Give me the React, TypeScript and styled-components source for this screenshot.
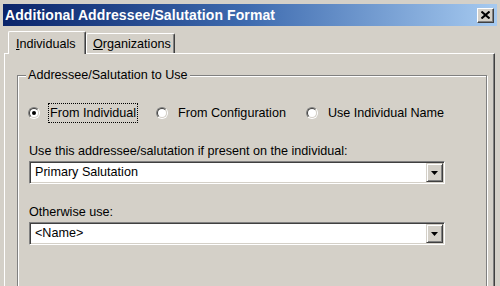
import { FC } from "react";
import styled, { createGlobalStyle } from "styled-components";

const GlobalStyle = createGlobalStyle`
  html, body {
    margin: 0;
    padding: 0;
    background: #d4d0c8;
  }
  body {
    font-family: "Liberation Sans", Arial, sans-serif;
    font-size: 12.6px;
    color: #000;
  }
`;

const Frame = styled.div`
  width: 500px;
  height: 286px;
  box-sizing: border-box;
  padding: 4px 3px 0 3px;
  background: #d4d0c8;
  overflow: hidden;
  display: flex;
  flex-direction: column;
`;

const TitleBar = styled.div`
  flex: 0 0 22px;
  display: flex;
  align-items: center;
  justify-content: space-between;
  padding: 0 3px 0 2px;
  background: linear-gradient(to right, #0a246a 0%, #3f6cb0 50%, #a6caf0 100%);
`;

const Title = styled.div`
  color: #fff;
  font-weight: bold;
  font-size: 14px;
  letter-spacing: 0.1px;
  white-space: nowrap;
`;

const CloseButton = styled.div`
  width: 17px;
  height: 15px;
  box-sizing: border-box;
  background: #d4d0c8;
  border: 1px solid;
  border-color: #fff #404040 #404040 #fff;
  box-shadow: inset -1px -1px 0 #808080;
  display: flex;
  align-items: center;
  justify-content: center;
`;

const Body = styled.div`
  flex: 1 1 auto;
  display: flex;
  flex-direction: column;
  padding: 5px 2px 0 1px;
`;

const TabStrip = styled.div`
  display: flex;
  align-items: flex-end;
  padding-left: 4px;
  position: relative;
  z-index: 1;
`;

const Tab = styled.div<{ $selected?: boolean; $width: number }>`
  width: ${(p) => p.$width}px;
  height: ${(p) => (p.$selected ? 23 : 20)}px;
  box-sizing: border-box;
  margin-bottom: ${(p) => (p.$selected ? -1 : 0)}px;
  padding: ${(p) => (p.$selected ? "5px 0 0 7px" : "3px 0 0 6px")};
  line-height: 14px;
  background: #d4d0c8;
  border-left: 1px solid #fff;
  border-top: 1px solid #fff;
  border-right: 1px solid #404040;
  border-top-left-radius: 2px;
  border-top-right-radius: 2px;
  box-shadow: inset -1px 0 0 #808080;
  white-space: nowrap;
`;

const Panel = styled.div`
  flex: 1 1 auto;
  background: #d4d0c8;
  border-top: 1px solid #fff;
  border-left: 1px solid #fff;
  border-right: 1px solid #404040;
  box-shadow: inset -1px 0 0 #808080;
  padding: 14px 7px 0 12px;
`;

const GroupBox = styled.fieldset`
  margin: 0;
  min-height: 260px;
  box-sizing: border-box;
  border: 1px solid #808080;
  box-shadow: inset 1px 1px 0 #fff, 1px 1px 0 #fff;
  padding: 21px 10px 0 11px;
`;

const Legend = styled.legend`
  margin-left: -3px;
  padding: 0 2px;
  line-height: 14px;
  background: #d4d0c8;
`;

const RadioRow = styled.div`
  display: flex;
  align-items: center;
  gap: 18px;
  height: 20px;
`;

const RadioItem = styled.label`
  display: flex;
  align-items: center;
  gap: 8px;
  &:first-child {
    margin-left: -1px;
  }
`;

const RadioCircle = styled.span`
  width: 12px;
  height: 12px;
  box-sizing: border-box;
  border-radius: 50%;
  border: 1px solid;
  border-color: #808080 #fff #fff #808080;
  display: flex;
`;

const RadioInner = styled.span<{ $checked?: boolean }>`
  flex: 1;
  border-radius: 50%;
  border: 1px solid;
  border-color: #404040 #d4d0c8 #d4d0c8 #404040;
  background: #fff;
  display: flex;
  align-items: center;
  justify-content: center;
  &::after {
    content: "";
    width: 4px;
    height: 4px;
    border-radius: 50%;
    background: ${(p) => (p.$checked ? "#000" : "transparent")};
  }
`;

const RadioText = styled.span<{ $focused?: boolean }>`
  line-height: 18px;
  padding: 0 1px;
  border: 1px dotted ${(p) => (p.$focused ? "#000" : "transparent")};
  white-space: nowrap;
`;

const FieldLabel = styled.div`
  line-height: 14px;
  margin-top: 21px;
  white-space: nowrap;
`;

const SelectBox = styled.div`
  margin-top: 3px;
  width: 416px;
  height: 23px;
  box-sizing: border-box;
  background: #fff;
  border: 1px solid;
  border-color: #808080 #fff #fff #808080;
  box-shadow: inset 1px 1px 0 #404040, inset -1px -1px 0 #d4d0c8;
  padding: 1px;
  display: flex;
  align-items: stretch;
`;

const SelectValue = styled.div`
  flex: 1;
  padding-left: 4px;
  line-height: 19px;
  white-space: nowrap;
`;

const DropButton = styled.div`
  width: 17px;
  box-sizing: border-box;
  background: #d4d0c8;
  border: 1px solid;
  border-color: #d4d0c8 #404040 #404040 #d4d0c8;
  box-shadow: inset 1px 1px 0 #fff, inset -1px -1px 0 #808080;
  display: flex;
  align-items: center;
  justify-content: center;
`;

const Arrow = () => (
  <svg width="7" height="4" viewBox="0 0 7 4">
    <path d="M0 0h7L3.5 4z" fill="#000" />
  </svg>
);

const Select: FC<{ value: string }> = ({ value }) => (
  <SelectBox>
    <SelectValue>{value}</SelectValue>
    <DropButton>
      <Arrow />
    </DropButton>
  </SelectBox>
);

const Radio: FC<{ label: string; checked?: boolean; focused?: boolean }> = ({
  label,
  checked,
  focused,
}) => (
  <RadioItem>
    <RadioCircle>
      <RadioInner $checked={checked} />
    </RadioCircle>
    <RadioText $focused={focused}>{label}</RadioText>
  </RadioItem>
);

export default function App() {
  return (
    <>
      <GlobalStyle />
      <Frame>
        <TitleBar>
          <Title>Additional Addressee/Salutation Format</Title>
          <CloseButton>
            <svg width="9" height="8" viewBox="0 0 9 8">
              <path
                d="M0.5 0.5L8.5 7.5M8.5 0.5L0.5 7.5"
                stroke="#000"
                strokeWidth="2"
              />
            </svg>
          </CloseButton>
        </TitleBar>
        <Body>
          <TabStrip>
            <Tab $selected $width={78}>
              <u>I</u>ndividuals
            </Tab>
            <Tab $width={89}>
              <u>O</u>rganizations
            </Tab>
          </TabStrip>
          <Panel>
            <GroupBox>
              <Legend>Addressee/Salutation to Use</Legend>
              <RadioRow>
                <Radio label="From Individual" checked focused />
                <Radio label="From Configuration" />
                <Radio label="Use Individual Name" />
              </RadioRow>
              <FieldLabel>
                Use this addressee/salutation if present on the individual:
              </FieldLabel>
              <Select value="Primary Salutation" />
              <FieldLabel>Otherwise use:</FieldLabel>
              <Select value="<Name>" />
            </GroupBox>
          </Panel>
        </Body>
      </Frame>
    </>
  );
}
